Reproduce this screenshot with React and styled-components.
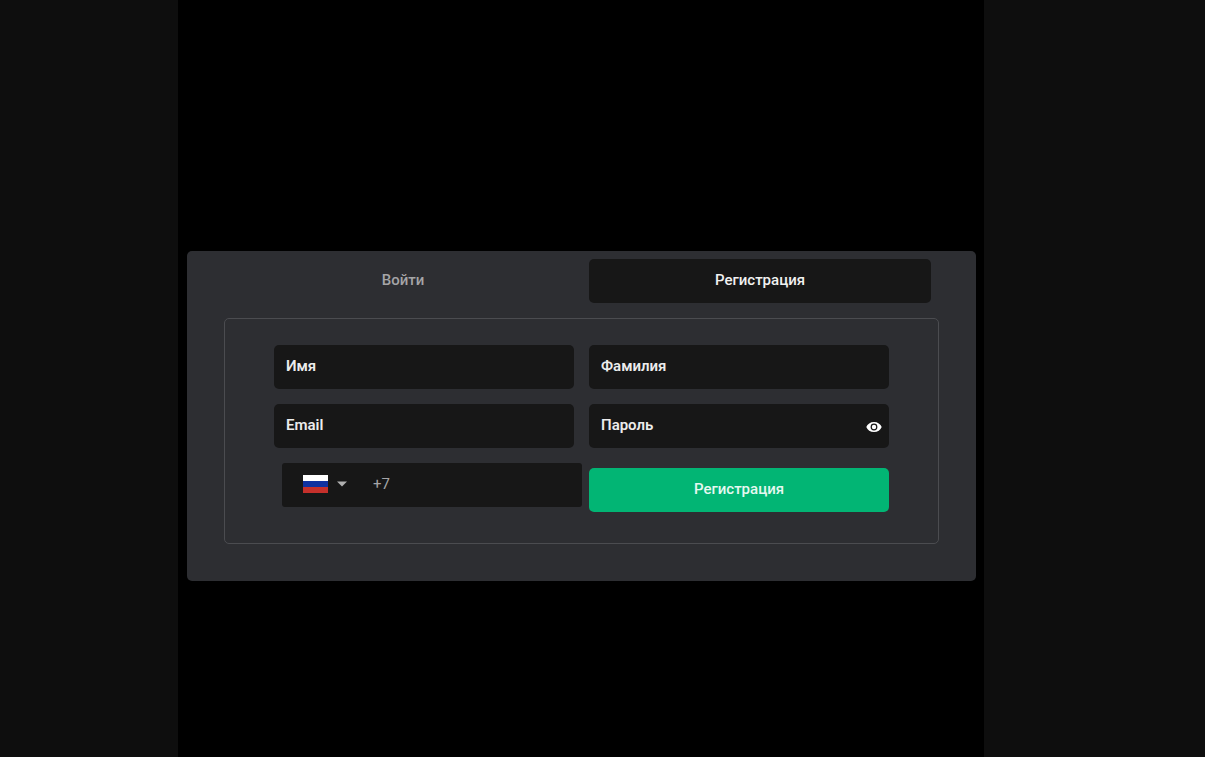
import React, { useState } from "react";
import styled, { createGlobalStyle } from "styled-components";

const GlobalStyle = createGlobalStyle`
  * {
    box-sizing: border-box;
  }
  body {
    margin: 0;
    background-color: #0e0e0e;
    font-family: Roboto, "Open Sans", sans-serif;
    font-size: 15px;
  }
  button, input, select {
    font: inherit;
  }
`;

const Page = styled.div`
  display: grid;
  grid-template-columns: 178fr 806fr 221fr;
  min-height: 100vh;
`;

const Content = styled.main`
  grid-column: 2;
  display: flex;
  flex-direction: column;
  justify-content: center;
  padding: 74px 8px 0 9px;
  background-color: black;
`;

const Card = styled.section`
  padding: 8px 37px 37px;
  border-radius: 5px;
  background-color: #2d2e32;
`;

const Tabs = styled.div`
  display: grid;
  grid-template-columns: 1fr 1fr;
  gap: 15px;
  padding: 0 8px;
  margin-bottom: 15px;
`;

const Tab = styled.button`
  height: 44px;
  border: none;
  border-radius: 5px;
  padding: 0 0 2px;
  font-weight: 500;
  cursor: pointer;
  color: ${({ $active }) => ($active ? "#f1f1f1" : "#a5a5a7")};
  background-color: ${({ $active }) => ($active ? "#171717" : "transparent")};
`;

const Form = styled.form`
  display: grid;
  grid-template-columns: 1fr 1fr;
  gap: 15px;
  padding: 26px 49px 31px;
  border: 1px solid #4b4c50;
  border-radius: 5px;
`;

const Field = styled.div`
  display: flex;
  align-items: center;
  height: 44px;
  min-width: 0;
  border-radius: 5px;
  background-color: #171717;
`;

const Input = styled.input`
  flex: 1;
  min-width: 0;
  height: 44px;
  padding: 0 12px 2px;
  border: none;
  outline: none;
  background: transparent;
  color: #ececec;
  font-weight: 600;
  &::placeholder {
    color: #ececec;
    opacity: 1;
  }
`;

const EyeButton = styled.button`
  display: flex;
  padding: 3px 7px 0 0;
  border: none;
  background: transparent;
  color: white;
  cursor: pointer;
`;

const PhoneField = styled(Field)`
  margin: 0 -8px 0 8px;
  border-radius: 3px;
`;

const Country = styled.label`
  position: relative;
  display: flex;
  align-items: center;
  gap: 9px;
  height: 44px;
  padding: 0 0 2px 21px;
`;

const CountrySelect = styled.select`
  position: absolute;
  inset: 0;
  width: 100%;
  opacity: 0;
  cursor: pointer;
`;

const PhoneInput = styled(Input)`
  padding-left: 26px;
  font-weight: 400;
  color: #a5a5a7;
`;

const Submit = styled.button`
  height: 44px;
  margin-top: 5px;
  padding: 0 0 2px;
  border: none;
  border-radius: 5px;
  background-color: #02b574;
  color: #e6f8f1;
  font-weight: 500;
  cursor: pointer;
`;

function Flag() {
  return (
    <svg width="25" height="18" viewBox="0 0 25 18" aria-hidden="true">
      <path fill="#fff" d="M0 0h25v6H0z" />
      <path fill="#0f32a0" d="M0 6h25v6H0z" />
      <path fill="#c5302b" d="M0 12h25v6H0z" />
    </svg>
  );
}

function Caret() {
  return (
    <svg width="10" height="6" viewBox="0 0 10 6" aria-hidden="true">
      <path fill="#b0b0b0" d="M0 0.5h10L5 5.5z" />
    </svg>
  );
}

function Eye() {
  return (
    <svg width="16" height="12" viewBox="0 0 16 12" aria-hidden="true">
      <path
        fill="currentColor"
        fillRule="evenodd"
        d="M8 1C4.4 1 1.4 3 .3 6c1.100 3 4.100 5 7.700 5s6.600-2 7.700-5C14.600 3 11.600 1 8 1zm0 8.400a3.400 3.400 0 1 1 0-6.800 3.400 3.400 0 0 1 0 6.800z"
      />
      <circle cx="8" cy="6" r="2.200" fill="currentColor" />
    </svg>
  );
}

export default function App() {
  const [tab, setTab] = useState("register");
  const [showPassword, setShowPassword] = useState(false);

  return (
    <>
      <GlobalStyle />
      <Page>
        <Content>
          <Card>
            <Tabs>
              <Tab type="button" $active={tab === "login"} onClick={() => setTab("login")}>
                Войти
              </Tab>
              <Tab type="button" $active={tab === "register"} onClick={() => setTab("register")}>
                Регистрация
              </Tab>
            </Tabs>
            <Form onSubmit={(e) => e.preventDefault()}>
              <Field>
                <Input aria-label="Имя" placeholder="Имя" />
              </Field>
              <Field>
                <Input aria-label="Фамилия" placeholder="Фамилия" />
              </Field>
              <Field>
                <Input type="email" aria-label="Email" placeholder="Email" />
              </Field>
              <Field>
                <Input
                  type={showPassword ? "text" : "password"}
                  aria-label="Пароль"
                  placeholder="Пароль"
                />
                <EyeButton
                  type="button"
                  aria-label="Показать пароль"
                  onClick={() => setShowPassword(!showPassword)}
                >
                  <Eye />
                </EyeButton>
              </Field>
              <PhoneField>
                <Country>
                  <Flag />
                  <Caret />
                  <CountrySelect aria-label="Страна">
                    <option value="ru">Россия</option>
                  </CountrySelect>
                </Country>
                <PhoneInput type="tel" aria-label="Телефон" defaultValue="+7" />
              </PhoneField>
              <Submit type="submit">Регистрация</Submit>
            </Form>
          </Card>
        </Content>
      </Page>
    </>
  );
}
